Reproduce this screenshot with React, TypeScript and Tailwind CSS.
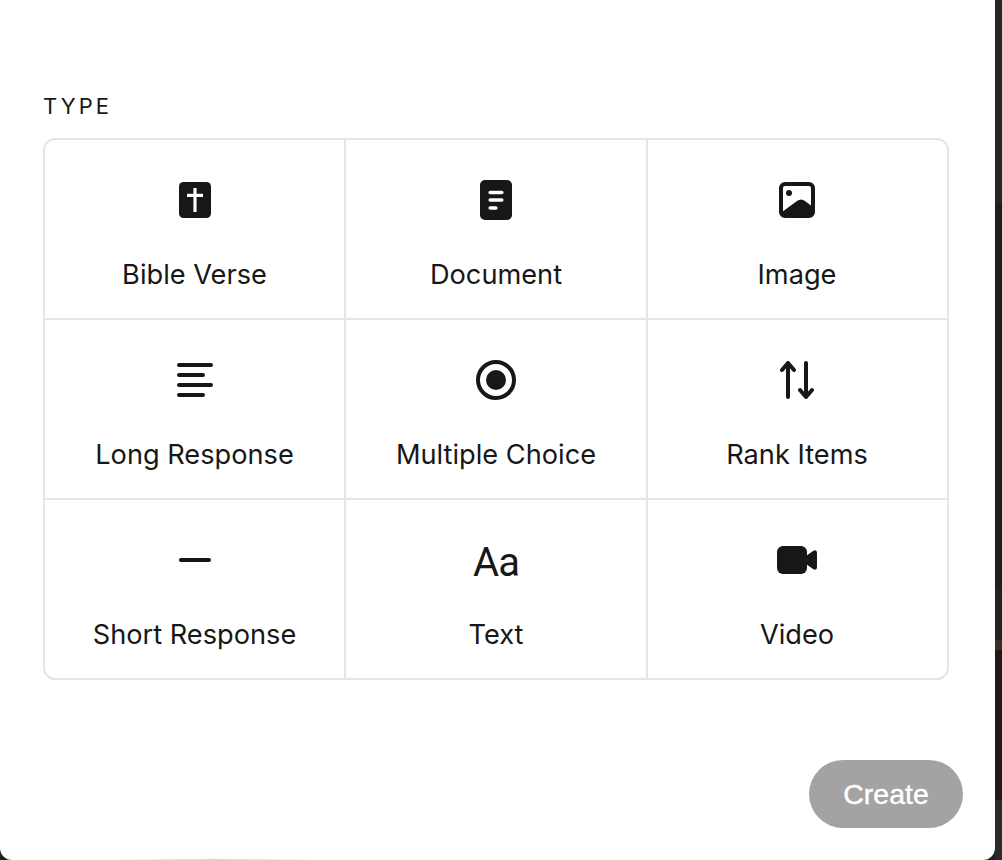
const INK = "#171717";

function Bible() {
  return (
    <svg width="32" height="36" viewBox="0 0 32 36">
      <rect width="32" height="36" rx="4.5" fill={INK} />
      <path d="M14.4 6h3.2v5.8h6.4v3.2h-6.4V30h-3.2V15H8v-3.2h6.4z" fill="#fff" />
    </svg>
  );
}
function Doc() {
  return (
    <svg width="32" height="40" viewBox="0 0 32 40">
      <rect width="32" height="40" rx="5" fill={INK} />
      <g stroke="#fff" strokeWidth="3.6" strokeLinecap="round">
        <path d="M10.2 12.5h11.6M10.2 20h11.6M10.2 28h5.6" />
      </g>
    </svg>
  );
}
function Pic() {
  return (
    <svg width="36" height="36" viewBox="0 0 36 36">
      <rect x="2" y="2" width="32" height="32" rx="4" fill="none" stroke={INK} strokeWidth="4" />
      <circle cx="10" cy="11" r="3" fill={INK} />
      <path d="M3 30L18 19q4-3 8 0l8 6v5q0 3-3 3H6q-3 0-3-3z" fill={INK} />
    </svg>
  );
}
function Lines() {
  return (
    <svg width="36" height="34" viewBox="0 0 36 34">
      <g stroke={INK} strokeWidth="4" strokeLinecap="round">
        <path d="M2 2h32M2 12h24M2 22h32M2 32h24" />
      </g>
    </svg>
  );
}
function Radio() {
  return (
    <svg width="40" height="40" viewBox="0 0 40 40">
      <circle cx="20" cy="20" r="18" fill="none" stroke={INK} strokeWidth="4" />
      <circle cx="20" cy="20" r="10" fill={INK} />
    </svg>
  );
}
function Rank() {
  return (
    <svg width="34" height="38" viewBox="0 0 34 38" fill="none" stroke={INK} strokeWidth="4" strokeLinecap="round" strokeLinejoin="round">
      <path d="M8 36V2M2 9l6-7 6 7M26 2v34M20 29l6 7 6-7" />
    </svg>
  );
}
function Dash() {
  return (
    <svg width="32" height="4" viewBox="0 0 32 4">
      <path d="M2 2h28" stroke={INK} strokeWidth="4" strokeLinecap="round" />
    </svg>
  );
}
function Aa() {
  return <span className="pt-[5px] font-['Roboto',sans-serif] text-[40px] leading-[40px] tracking-[-1px] text-[#171717] font-normal">Aa</span>;
}
function Cam() {
  return (
    <svg width="40" height="28" viewBox="0 0 40 28">
      <rect width="30" height="28" rx="6" fill={INK} />
      <path d="M29 10l7-5q4-2 4 2v14q0 4-4 2l-7-5z" fill={INK} />
    </svg>
  );
}

const items: [string, React.ReactNode][] = [
  ["Bible Verse", <Bible />],
  ["Document", <Doc />],
  ["Image", <Pic />],
  ["Long Response", <Lines />],
  ["Multiple Choice", <Radio />],
  ["Rank Items", <Rank />],
  ["Short Response", <Dash />],
  ["Text", <Aa />],
  ["Video", <Cam />],
];

export default function App() {
  return (
    <div className="relative flex h-[860px] w-[1002px] overflow-hidden bg-[#1f1f1f] font-['Inter',sans-serif] text-[#171717]">
      <div className="flex h-[860px] w-[995px] shrink-0 flex-col rounded-b-xl bg-white pl-[43px] pr-[32px] pt-[94px]">
        <div className="text-[22px] leading-[24px] tracking-[0.14em] font-normal">TYPE</div>
        <div className="mt-[20px] grid w-[906px] grid-cols-[301px_302px_1fr] overflow-hidden rounded-xl border-2 border-[#e5e5e5]">
          {items.map(([label, icon], i) => (
            <div
              key={label}
              className={`flex flex-col items-center border-[#e5e5e5] ${i % 3 !== 2 ? "border-r-2" : "pr-[2px]"} ${i < 6 ? "h-[180px] border-b-2" : "h-[178px]"}`}
            >
              <div className="mt-[40px] flex h-[40px] items-center justify-center">{icon}</div>
              <div className={`mt-[39px] text-[27.2px] leading-[32px] ${i % 3 === 2 ? "pl-[1px]" : ""}`}>{label}</div>
            </div>
          ))}
        </div>
        <div className="mt-[80px] flex justify-end">
          <button className="h-[68px] w-[154px] rounded-full bg-[#a3a3a3] font-['Liberation_Sans',sans-serif] text-[28.5px] text-white [-webkit-text-stroke:0.4px_white]">
            Create
          </button>
        </div>
      </div>
      <div className="flex flex-1 flex-col">
        <div className="h-[203px] bg-[#262626]" />
        <div className="h-[384px] bg-[#1e1e1e]" />
        <div className="h-[53px] bg-[#222222]" />
        <div className="h-[10px] bg-[#3a2e28]" />
        <div className="h-[150px] bg-[#1e1a16]" />
        <div className="flex-1 bg-[#2a2a2a]" />
      </div>
      <div className="absolute bottom-0 left-[110px] h-px w-[210px] bg-gradient-to-r from-white via-[#d4d4d4] to-white" />
    </div>
  );
}
